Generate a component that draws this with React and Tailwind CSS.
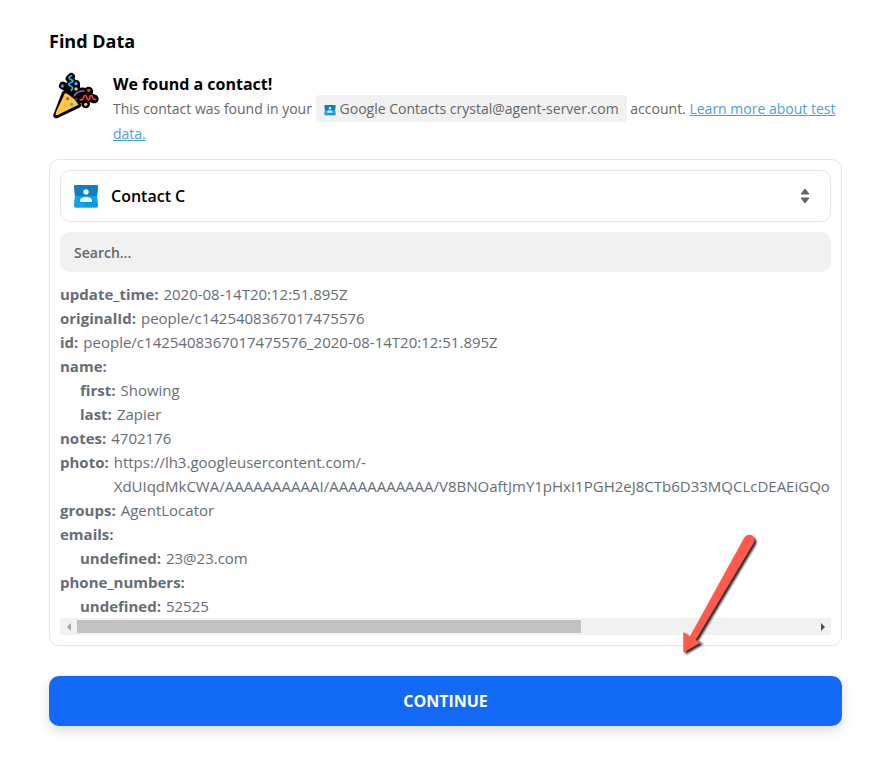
import React, { useState } from 'react';

const contactFields = [
  { label: 'update_time', value: '2020-08-14T20:12:51.895Z' },
  { label: 'originalId', value: 'people/c1425408367017475576' },
  { label: 'id', value: 'people/c1425408367017475576_2020-08-14T20:12:51.895Z' },
  {
    label: 'name',
    children: [
      { label: 'first', value: 'Showing' },
      { label: 'last', value: 'Zapier' },
    ],
  },
  { label: 'notes', value: '4702176' },
  {
    label: 'photo',
    value:
      'https://lh3.googleusercontent.com/-XdUIqdMkCWA/AAAAAAAAAAI/AAAAAAAAAAA/V8BNOaftJmY1pHxI1PGH2eJ8CTb6D33MQCLcDEAEiGQo',
  },
  { label: 'groups', value: 'AgentLocator' },
  { label: 'emails', children: [{ label: 'undefined', value: '23@23.com' }] },
  { label: 'phone_numbers', children: [{ label: 'undefined', value: '52525' }] },
];

const PartyPopper = () => (
  <svg viewBox="3 9 168 144" className="w-14 h-12 shrink-0" aria-hidden="true">
    {/* Black outline shapes */}
    <g fill="#000" stroke="#000" strokeLinejoin="round" strokeLinecap="round">
      <path d="M50 74 L25 139 L90 108 Z" strokeWidth="18" />
      <path d="M70 23 L64 29 L73 38 L65 48 L74 62" fill="none" strokeWidth="22" />
      <path d="M45 50 L58 56 L66 70 M84 45 L84 62" fill="none" strokeWidth="24" />
      <path d="M80 78 C88 68 98 65 110 67 L124 68" fill="none" strokeWidth="22" />
      <path d="M98 90 L110 82 L126 86 L139 90" fill="none" strokeWidth="26" />
      <circle cx="122" cy="66" r="13" strokeWidth="0" />
      <circle cx="113" cy="105" r="13" strokeWidth="0" />
    </g>
    <path d="M51 72 C65 77 84 93 91 107 L29 138 C24 140 21 137 23 132 Z" fill="#ffc843" />
    <path
      d="M70 20 C60 24 62 29 68 31 C78 34 76 39 68 41 C59 44 62 49 68 51 C76 54 74 60 70 64"
      fill="none"
      stroke="#2bbdf0"
      strokeWidth="5"
      strokeLinecap="round"
    />
    <path d="M79 80 C84 71 94 66 107 66" fill="none" stroke="#8f65d8" strokeWidth="5" strokeLinecap="round" />
    <path
      d="M97 92 C102 94 105 91 107 85 C109 77 114 77 116 85 C118 96 123 95 125 87 C127 77 132 77 134 86 C135 91 138 92 143 91"
      fill="none"
      stroke="#f4412d"
      strokeWidth="5"
      strokeLinecap="round"
    />
    <circle cx="43" cy="51" r="5" fill="#8f65d8" />
    <circle cx="84" cy="44" r="5" fill="#2bbdf0" />
    <circle cx="84" cy="60" r="5" fill="#f7dc1b" />
    <circle cx="122" cy="64" r="5" fill="#f4412d" />
    <circle cx="113" cy="106" r="5" fill="#f7dc1b" />
    <circle cx="59" cy="89" r="5" fill="#f4412d" />
    <circle cx="71" cy="106" r="5" fill="#2bb5d8" />
  </svg>
);

const ContactsIcon = ({ className }) => (
  <svg viewBox="0 0 26 26" className={className} aria-hidden="true">
    <path d="M2 3 H24 Q25 3 25 4 L24 14 L25 23 Q25 25 23 25 H3 Q1 25 1 23 L2 14 L1 4 Q1 3 2 3 Z" fill="#9aa3a8" />
    <path d="M2 13 H24 L25 22 Q25 24 23 24 H3 Q1 24 1 22 Z" fill="#0fa5ee" />
    <path d="M2 2 H24 Q25 2 25 3 L24 13 H2 L1 3 Q1 2 2 2 Z" fill="#0f7fc1" />
    <path d="M18 15 L25 22 Q25 24 23 24 H14 L8 18 Z" fill="#0c98df" />
    <circle cx="13" cy="9" r="2.7" fill="#eef2f5" />
    <path d="M7 19 V17.500 C7 15 10 14 13 14 C16 14 19 15 19 17.500 V19 Z" fill="#eef2f5" />
  </svg>
);

const PointerArrow = () => (
  <svg
    viewBox="676 528 88 136"
    className="absolute right-[77px] -bottom-[19px] w-[88px] h-[136px] pointer-events-none drop-shadow-[2px_2px_1px_rgba(0,0,0,0.85)]"
    aria-hidden="true"
  >
    <path
      d="M744.300 537.500 A5.300 5.300 0 0 1 753.800 542.700 L695.500 640.300 L700 641.300 Q701.500 642 700 643 L684.500 652 Q683.300 652.500 683.300 651 V633 Q683.500 631.800 684.800 632.800 L689.800 636.500 Z"
      fill="#ff5a4b"
    />
  </svg>
);

const Field = ({ field }) => (
  <li>
    <div className="flex gap-[5px]">
      <span className="font-bold">{field.label}:</span>
      {field.value && <span>{field.value}</span>}
    </div>
    {field.children && (
      <ul className="pl-5">
        {field.children.map((child) => (
          <Field key={child.label} field={child} />
        ))}
      </ul>
    )}
  </li>
);

const HorizontalScrollbar = () => (
  <div className="flex h-[17px] bg-[#f1f1f1]">
    <button type="button" aria-label="Scroll left" className="w-[17px] flex items-center justify-center">
      <svg viewBox="0 0 4 8" className="w-1 h-2" fill="#a3a3a3"><path d="M4 0 V8 L0 4 Z" /></svg>
    </button>
    <div className="flex-1 py-[2px]">
      <div className="h-full w-13/19 bg-[#c1c1c1]"></div>
    </div>
    <button type="button" aria-label="Scroll right" className="w-[17px] flex items-center justify-center">
      <svg viewBox="0 0 4 8" className="w-1 h-2" fill="#505050"><path d="M0 0 V8 L4 4 Z" /></svg>
    </button>
  </div>
);

export default function App() {
  const [query, setQuery] = useState('');

  return (
    <main className="min-h-screen bg-white px-[49px] pt-[27px] pb-10 font-['Open_Sans','Noto_Sans',sans-serif]">
      <h1 className="text-lg leading-7 font-bold text-black">Find Data</h1>

      {/* Result message */}
      <section className="mt-[17px] flex items-start gap-2">
        <PartyPopper />
        <div>
          <h2 className="text-base leading-6 font-bold text-black">We found a contact!</h2>
          <p className="text-sm leading-[25px] text-[#666]">
            This contact was found in your{' '}
            <span className="whitespace-nowrap rounded bg-[#f1f1f1] px-2 py-1">
              <ContactsIcon className="inline-block w-3 h-3 mr-1 align-[-2px]" />
              Google Contacts crystal@agent-server.com
            </span>{' '}
            account.{' '}
            <a href="#test-data" className="text-[#499df3] underline">
              Learn more about test data.
            </a>
          </p>
        </div>
      </section>

      {/* Sample picker */}
      <section className="relative mt-[13px] rounded-[10px] border border-[#e5e5e5] p-[10px]">
        <div className="flex h-[52px] items-center rounded-[10px] border border-[#e5e5e5] pl-3 pr-5">
          <ContactsIcon className="w-[26px] h-[26px] shrink-0" />
          <select aria-label="Contact" className="h-full flex-1 appearance-none bg-transparent pl-3 text-base font-semibold text-black outline-none">
            <option>Contact C</option>
          </select>
          <svg viewBox="0 0 10 16" className="w-[10px] h-4 shrink-0" fill="#666" stroke="#666" strokeLinejoin="round" aria-hidden="true">
            <path d="M5 1 L9 6 H1 Z" />
            <path d="M5 15 L9 10 H1 Z" />
          </svg>
        </div>

        <input
          type="text"
          aria-label="Search"
          placeholder="Search..."
          value={query}
          onChange={(e) => setQuery(e.target.value)}
          className="mt-[10px] block h-10 w-full rounded-[10px] bg-[#f1f1f1] px-[14px] text-sm font-semibold text-[#666] outline-none placeholder:text-[#666]"
        />

        <div className="mt-[10px] overflow-hidden">
          <ul className="text-[15px] leading-6 text-[#666d74]">
            {contactFields.map((field) => (
              <Field key={field.label} field={field} />
            ))}
          </ul>
        </div>
        <HorizontalScrollbar />
        <PointerArrow />
      </section>

      <button
        type="button"
        className="mt-[30px] h-[50px] w-full rounded-[10px] bg-[#136bf5] text-base font-bold text-white shadow-[0_4px_12px_rgba(0,0,0,0.15)]"
      >
        CONTINUE
      </button>
    </main>
  );
}
